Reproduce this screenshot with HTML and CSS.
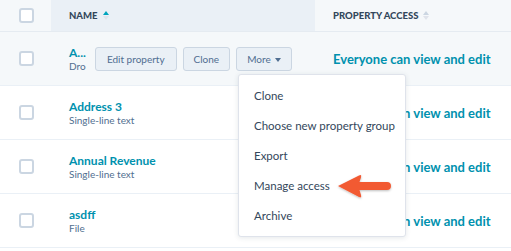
FILE: index.html
```html
<!DOCTYPE html>
<html>
<head lang="en">
    <meta charset="UTF-8">
    <title>Properties</title>
    <link rel="stylesheet" href="styles.css">
</head>
<body>
<div class="table">
    <div class="row head">
        <div class="cell check"><span class="box"></span></div>
        <div class="cell name sorted">NAME
            <span class="sort"><i class="up"></i><i class="down"></i></span>
        </div>
        <div class="cell access">PROPERTY ACCESS
            <span class="sort"><i class="up off"></i><i class="down"></i></span>
        </div>
    </div>
    <div class="row hover">
        <div class="cell check"><span class="box"></span></div>
        <div class="cell name">
            <div class="label">
                <a href="javascript:void(0);" class="title">A...</a>
                <div class="type">Dro</div>
            </div>
            <div class="actions">
                <a href="javascript:void(0);" class="btn">Edit property</a>
                <a href="javascript:void(0);" class="btn">Clone</a>
                <a href="javascript:void(0);" class="btn">More <span class="caret"></span></a>
            </div>
        </div>
        <div class="cell access"><span class="perm">Everyone can view and edit</span></div>
    </div>
    <div class="row">
        <div class="cell check"><span class="box"></span></div>
        <div class="cell name">
            <div class="label">
                <a href="javascript:void(0);" class="title">Address 3</a>
                <div class="type">Single-line text</div>
            </div>
        </div>
        <div class="cell access"><span class="perm">Everyone can view and edit</span></div>
    </div>
    <div class="row">
        <div class="cell check"><span class="box"></span></div>
        <div class="cell name">
            <div class="label">
                <a href="javascript:void(0);" class="title">Annual Revenue</a>
                <div class="type">Single-line text</div>
            </div>
        </div>
        <div class="cell access"><span class="perm">Everyone can view and edit</span></div>
    </div>
    <div class="row">
        <div class="cell check"><span class="box"></span></div>
        <div class="cell name">
            <div class="label">
                <a href="javascript:void(0);" class="title">asdff</a>
                <div class="type">File</div>
            </div>
        </div>
        <div class="cell access"><span class="perm">Everyone can view and edit</span></div>
    </div>
</div>

<!-- dropdown -->
<ul class="menu">
    <li>Clone</li>
    <li>Choose new property group</li>
    <li>Export</li>
    <li>Manage access</li>
    <li>Archive</li>
</ul>

<svg class="pointer" width="60" height="32" viewBox="0 0 60 32">
    <defs>
        <filter id="sh" x="-20%" y="-30%" width="140%" height="160%">
            <feDropShadow dx="0" dy="1" stdDeviation="1" flood-color="#000000" flood-opacity="0.25"/>
        </filter>
    </defs>
    <path filter="url(#sh)" d="M2 14 L23 3.5 Q26 2 25 5.5 L23.5 10 L51 10 Q55 10 55 14 Q55 18 51 18 L23.5 18 L25 23 Q26 26.5 23 25 Z" fill="#f25a33"/>
</svg>
</body>
</html>
```

FILE: styles.css
```css
ul, li, div, span, a {
    padding: 0px;
    margin: 0px;
}
body {
    margin: 0px;
    background: #ffffff;
    font-family: "Lato", "Liberation Sans", sans-serif;
    color: #33475b;
    overflow: hidden;
}
a {
    text-decoration: none;
}
.table {
    width: 511px;
}
.row {
    display: grid;
    grid-template-columns: 51px 264px 196px;
    height: 53px;
    border-bottom: 1px solid #eaf0f6;
}
.row.head {
    height: 31px;
    background: #f5f8fa;
    border-bottom: 1px solid #e5ebf1;
}
.row.hover {
    background: #f5f8fa;
}
.cell {
    display: flex;
    align-items: center;
}
.check {
    justify-content: center;
    padding-left: 1px;
}
.box {
    width: 11px;
    height: 11px;
    border: 2px solid #cbd6e2;
    border-radius: 3px;
    background: #ffffff;
}
.name, .access {
    padding-left: 18px;
}
.head .cell {
    font-size: 9.5px;
    font-weight: 900;
    color: #33475b;
}
.head .sorted {
    background: #eaf0f6;
}
.sort {
    display: inline-flex;
    flex-direction: column;
    margin-left: 5px;
    gap: 1px;
}
.sort i {
    width: 0;
    height: 0;
    border-left: 3px solid transparent;
    border-right: 3px solid transparent;
}
.sort .up {
    border-bottom: 4px solid #00a4bd;
}
.sort .up.off {
    border-bottom-color: #cbd6e2;
}
.sort .down {
    border-top: 4px solid #dfe3eb;
}
.label {
    display: flex;
    flex-direction: column;
}
.title {
    font-size: 12px;
    font-weight: 700;
    color: #0091ae;
    line-height: 15px;
}
.type {
    font-size: 10px;
    color: #516f90;
    line-height: 13px;
}
.actions {
    display: flex;
    gap: 6px;
    margin-left: 9px;
}
.btn {
    height: 22px;
    line-height: 22px;
    padding: 0px 10px;
    font-size: 10px;
    color: #506e91;
    background: #eaf0f6;
    border: 1px solid #cbd6e2;
    border-radius: 3px;
}
.btn:first-child {
    padding: 0px 11px;
}
.caret {
    display: inline-block;
    width: 0;
    height: 0;
    margin-left: 2px;
    vertical-align: middle;
    border-left: 3px solid transparent;
    border-right: 3px solid transparent;
    border-top: 4px solid #506e91;
}
.perm {
    font-size: 13px;
    font-weight: 700;
    color: #0091ae;
}
.menu {
    position: absolute;
    left: 238px;
    top: 74px;
    width: 166px;
    padding: 6px 0px 5px 0px;
    list-style: none;
    background: #ffffff;
    border: 1px solid #dfe3eb;
    border-radius: 3px;
    box-shadow: 0px 1px 5px rgba(45, 62, 80, 0.12);
}
.menu li {
    height: 30px;
    line-height: 30px;
    padding-left: 15px;
    font-size: 11.5px;
    color: #33475b;
}
.pointer {
    position: absolute;
    left: 336px;
    top: 172px;
}
```
